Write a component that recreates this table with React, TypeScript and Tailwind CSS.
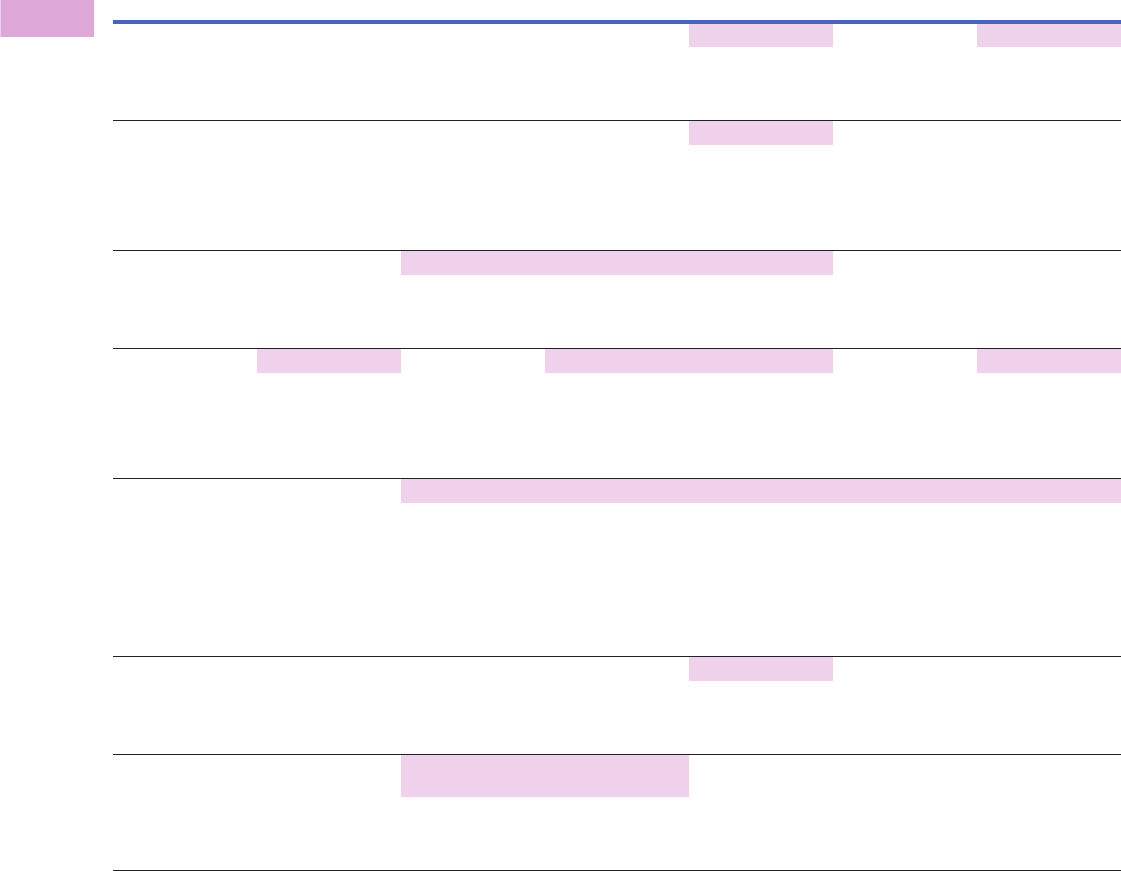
import React from "react";

type Seg = { start: number; span: number };
type Row = { h: string; barH: string; segs: Seg[] };

const spanCls: Record<number, string> = {
  1: "col-span-1",
  2: "col-span-2",
  3: "col-span-3",
  4: "col-span-4",
  5: "col-span-5",
};
const startCls: Record<number, string> = {
  1: "col-start-1",
  2: "col-start-2",
  3: "col-start-3",
  4: "col-start-4",
  5: "col-start-5",
  6: "col-start-6",
  7: "col-start-7",
};

const rows: Row[] = [
  { h: "h-[97px]", barH: "h-[23px]", segs: [{ start: 5, span: 1 }, { start: 7, span: 1 }] },
  { h: "h-[130px]", barH: "h-[24px]", segs: [{ start: 5, span: 1 }] },
  { h: "h-[98px]", barH: "h-[24px]", segs: [{ start: 3, span: 3 }] },
  { h: "h-[130px]", barH: "h-[24px]", segs: [{ start: 2, span: 1 }, { start: 4, span: 2 }, { start: 7, span: 1 }] },
  { h: "h-[178px]", barH: "h-[24px]", segs: [{ start: 3, span: 5 }] },
  { h: "h-[98px]", barH: "h-[24px]", segs: [{ start: 5, span: 1 }] },
  { h: "h-[116px]", barH: "h-[42px]", segs: [{ start: 3, span: 2 }] },
];

export default function App() {
  return (
    <div className="w-[1121px] h-[871px] bg-white flex overflow-hidden" style={{ fontFamily: '"Liberation Sans", sans-serif' }}>
      <div className="w-[113px] shrink-0">
        <div className="w-[94px] h-[37px] bg-[#dda8d7] border-l border-[#ecd0e9]" />
      </div>
      <div className="flex-1 pt-[20px]">
        <div className="h-[4px] bg-[#4267b8]" />
        {rows.map((r, i) => (
          <div key={i} className={`grid grid-cols-7 border-b border-[#222222] ${r.h} content-start`}>
            {r.segs.map((s, j) => (
              <div key={j} className={`${startCls[s.start]} ${spanCls[s.span]} ${r.barH} bg-[#f0d1eb]`} />
            ))}
          </div>
        ))}
      </div>
    </div>
  );
}
